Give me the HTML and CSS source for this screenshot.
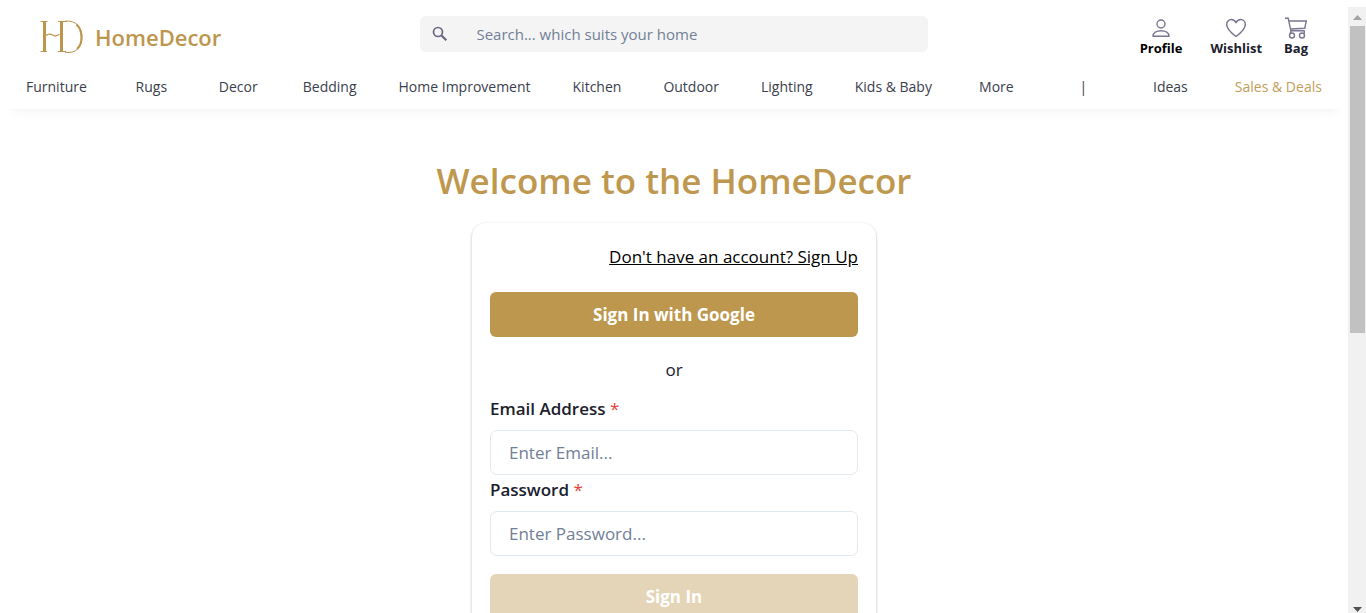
FILE: index.html
```html
<!DOCTYPE html>
<html lang="en">
<head>
<meta charset="utf-8">
<meta name="viewport" content="width=device-width, initial-scale=1">
<title>HomeDecor - Sign In</title>
<link rel="stylesheet" href="styles.css">
</head>
<body>
<div class="window">
  <div class="page">
    <header class="header">
      <div class="topbar">
        <a class="brand" href="#">
          <svg class="brand-mark" viewBox="0 0 44 34" aria-hidden="true">
            <g fill="none" stroke="currentColor">
              <path d="M4.5 1.5v30M21.5 1.5v30" stroke-width="3"/>
              <path d="M.5 1.5h7M.5 31.5h6.500M18 1.500h9M18 31.500h8" stroke-width="1"/>
              <path d="M6 15.500c3-2.500 5-1.500 7-.2s4 .8 6.500-1" stroke-width="1.300"/>
              <path d="M25 1.200c11-1.200 17 6 17 15.800 0 10-5.500 16.800-17 15.300" stroke-width="1"/>
              <path d="M36.500 4.500c6.500 6 6.500 19 .5 24.500" stroke-width="2"/>
            </g>
          </svg>
          <span>HomeDecor</span>
        </a>
        <form class="search" role="search">
          <svg class="search-icon" viewBox="0 0 16 16" aria-hidden="true">
            <circle cx="6" cy="6" r="4.500" fill="none" stroke="currentColor" stroke-width="1.700"/>
            <path d="M9.500 9.500l4.800 4.800" fill="none" stroke="currentColor" stroke-width="2.200"/>
          </svg>
          <input class="search-input" type="search" aria-label="Search" placeholder="Search... which suits your home">
        </form>
        <div class="actions">
          <a class="action action-profile" href="#">
            <svg class="action-icon" viewBox="0 0 22 22" aria-hidden="true">
              <g fill="none" stroke="currentColor" stroke-width="1.400">
                <circle cx="11" cy="7" r="4"/>
                <path d="M3 19.300c0-3.500 3.500-5.600 8-5.600s8 2.100 8 5.600z" stroke-linejoin="round"/>
              </g>
            </svg>
            <span>Profile</span>
          </a>
          <a class="action" href="#">
            <svg class="action-icon" viewBox="0 0 22 22" aria-hidden="true">
              <path d="M11 19.500C5.500 15.500 1.700 12 1.700 7.600c0-3 2-5 4.600-5 2.100 0 3.700 1.100 4.700 3.100 1-2 2.600-3.100 4.700-3.100 2.600 0 4.600 2 4.600 5 0 4.400-3.800 7.900-9.300 11.900z" fill="none" stroke="currentColor" stroke-width="1.500" stroke-linejoin="round"/>
            </svg>
            <span>Wishlist</span>
          </a>
          <a class="action" href="#">
            <svg class="action-icon" viewBox="0 0 22 22" aria-hidden="true">
              <g fill="none" stroke="currentColor" stroke-width="1.400">
                <path d="M0 1.200h3.200l2.700 12.600h13.600M3.800 4h17.500l-1.600 7.300-14.300.7"/>
                <circle cx="7" cy="18.500" r="2.500"/>
                <circle cx="17" cy="18.500" r="2.500"/>
                <path d="M5.900 13.800l-.6 2.700M19.300 13.800v2.700"/>
              </g>
            </svg>
            <span>Bag</span>
          </a>
        </div>
      </div>
      <nav class="nav" aria-label="Categories">
        <a href="#">Furniture</a>
        <a href="#">Rugs</a>
        <a href="#">Decor</a>
        <a href="#">Bedding</a>
        <a href="#">Home Improvement</a>
        <a href="#">Kitchen</a>
        <a href="#">Outdoor</a>
        <a href="#">Lighting</a>
        <a href="#">Kids &amp; Baby</a>
        <a href="#">More</a>
        <span>|</span>
        <a href="#">Ideas</a>
        <a class="nav-sale" href="#">Sales &amp; Deals</a>
      </nav>
    </header>
    <main class="main">
      <h1 class="title">Welcome to the HomeDecor</h1>
      <form class="card">
        <a class="signup" href="#">Don't have an account? Sign Up</a>
        <button class="button" type="button">Sign In with Google</button>
        <p class="or">or</p>
        <label class="label" for="email">Email Address <span class="required">*</span></label>
        <input class="field" id="email" type="email" placeholder="Enter Email...">
        <label class="label" for="password">Password <span class="required">*</span></label>
        <input class="field" id="password" type="password" placeholder="Enter Password...">
        <button class="button button-submit" type="submit" disabled>Sign In</button>
      </form>
    </main>
  </div>
  <div class="scrollbar" aria-hidden="true">
    <svg class="arrow" viewBox="0 0 18 18"><path d="M5 13l4.500-5 4.500 5z" fill="#a3a3a3"/></svg>
    <div class="track"><div class="thumb"></div></div>
    <svg class="arrow" viewBox="0 0 18 18"><path d="M5 12h9l-4.500 5z" fill="#505050"/></svg>
  </div>
</div>
</body>
</html>
```
FILE: styles.css
```css
* {
  box-sizing: border-box;
}

body {
  margin: 0;
  background: #fff;
  color: #1a202c;
  font-family: "Open Sans", "Noto Sans", sans-serif;
  font-size: 17px;
  line-height: 27px;
}

a {
  color: inherit;
  text-decoration: none;
}

input,
button {
  font: inherit;
}

.window {
  display: flex;
  height: 100vh;
}

.page {
  flex: 1;
  min-width: 0;
  overflow-y: auto;
  scrollbar-width: none;
}

.header {
  padding: 16px 6px 9px;
  box-shadow: 0 12px 12px -12px rgba(0, 0, 0, 0.08);
}

.topbar {
  display: grid;
  grid-template-columns: 1fr 40% 1fr;
  align-items: start;
  padding: 0 34px;
}

.brand {
  display: flex;
  align-items: center;
  gap: 11px;
  padding-top: 4px;
  color: #bd964d;
  font-size: 22px;
  font-weight: 600;
}

.brand-mark {
  width: 44px;
  height: 34px;
}

.search {
  display: flex;
  align-items: center;
  height: 36px;
  padding: 0 12px;
  border-radius: 6px;
  background: #f4f4f4;
}

.search-icon {
  flex: none;
  width: 16px;
  height: 16px;
  color: #6b6680;
}

.search-input {
  flex: 1;
  min-width: 0;
  padding: 0 0 0 28px;
  border: 0;
  outline: 0;
  background: transparent;
  font-size: 15px;
}

.search-input::placeholder,
.field::placeholder {
  color: #718096;
  opacity: 1;
}

.actions {
  display: flex;
  justify-content: flex-end;
  gap: 22px;
}

.action {
  display: flex;
  flex-direction: column;
  align-items: center;
  padding-top: 1px;
  color: #1a202c;
  font-size: 13px;
  font-weight: 700;
  line-height: 18px;
}

.action-profile {
  margin-right: 6px;
  color: #000;
}

.action-icon {
  width: 22px;
  height: 22px;
  color: #7a7590;
}

.nav {
  display: flex;
  justify-content: space-between;
  margin-top: 16px;
  color: #3a404d;
  font-size: 14px;
  line-height: 27px;
  white-space: nowrap;
}

.nav > * {
  min-width: 85px;
  padding: 0 20px;
  text-align: center;
}

.nav .nav-sale {
  color: #c39d58;
}

.main {
  display: flex;
  flex-direction: column;
  align-items: center;
  padding: 45px 16px 45px;
}

.title {
  margin: 0 0 15px;
  color: #bf9850;
  font-size: 35px;
  font-weight: 600;
  line-height: 54px;
}

.card {
  display: flex;
  flex-direction: column;
  width: 100%;
  max-width: 404px;
  padding: 20px 18px;
  border-radius: 14px;
  box-shadow: 0 1px 3px rgba(0, 0, 0, 0.25), 0 1px 2px rgba(0, 0, 0, 0.06);
}

.signup {
  align-self: flex-end;
  margin-bottom: 22px;
  color: #000;
  font-size: 17px;
  text-decoration: underline;
}

.button {
  height: 45px;
  border: 0;
  border-radius: 6px;
  background: #bd974e;
  color: #fff;
  font-weight: 700;
}

.button-submit {
  margin-top: 18px;
  background: #e5d5b8;
}

.or {
  margin: 19px 0 12px;
  text-align: center;
}

.label {
  margin: 0 0 8px;
  font-weight: 600;
}

.field + .label {
  margin-top: 1px;
}

.required {
  color: #e53e3e;
  font-weight: 400;
}

.field {
  width: 100%;
  height: 45px;
  padding: 0 18px;
  border: 1px solid #e2e8f0;
  border-radius: 7px;
  background: #fff;
}

.scrollbar {
  display: flex;
  flex-direction: column;
  width: 18px;
  margin-top: 7px;
  background: #f1f1f1;
}

.arrow {
  flex: none;
  width: 18px;
  height: 18px;
}

.track {
  flex: 1;
  padding: 1px 1px 0 2px;
}

.thumb {
  height: 54%;
  background: #c1c1c1;
}
```
